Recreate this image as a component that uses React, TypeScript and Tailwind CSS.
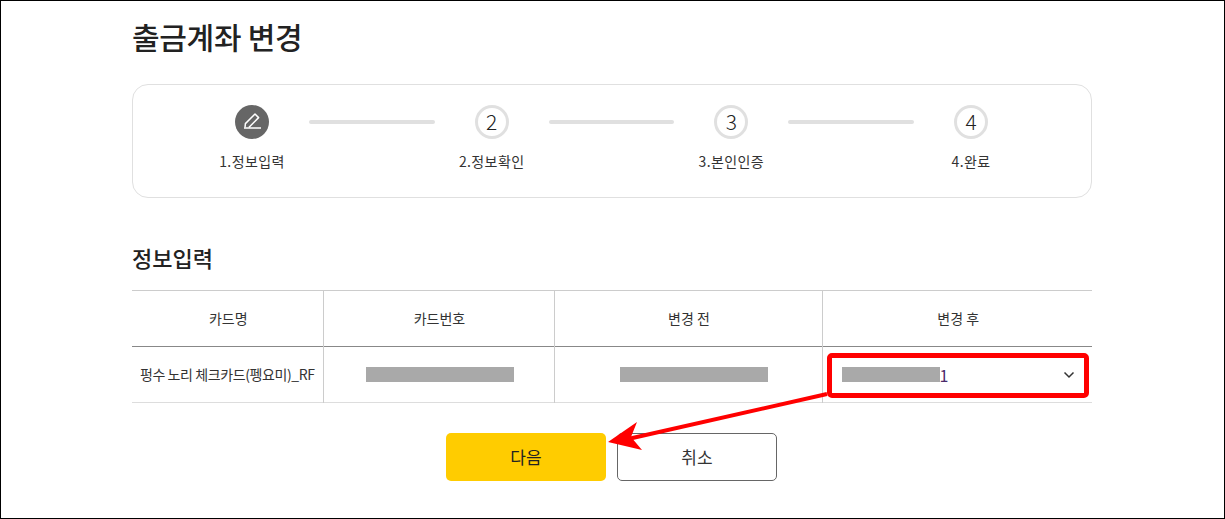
import React from "react";

const steps = ["1.정보입력", "2.정보확인", "3.본인인증", "4.완료"];

function Pencil() {
  return (
    <svg width="34" height="34" viewBox="0 0 34 34" fill="none" stroke="#fff" strokeWidth="1.5">
      <path d="M10 22.5 L10.4 18.6 L20 9 L23.6 12.6 L13.8 22.5" strokeLinejoin="round" />
      <path d="M9 23 H26" />
    </svg>
  );
}

function Step({ index, label }: { index: number; label: string }) {
  return (
    <div className="w-[114px] flex flex-col items-center shrink-0">
      {index === 0 ? (
        <div className="w-[34px] h-[34px] rounded-full bg-[#666666]">
          <Pencil />
        </div>
      ) : (
        <div className="w-[34px] h-[34px] rounded-full border-[3px] border-[#e0e0e0] flex items-center justify-center pb-[1px] text-[21px] leading-none font-light text-[#222222]">
          {index + 1}
        </div>
      )}
      <div className="mt-[12px] text-[14px] leading-[20px] tracking-[0.4px] text-[#333333] whitespace-nowrap">{label}</div>
    </div>
  );
}

function Masked({ w }: { w: string }) {
  return <span className={`block h-[15px] bg-[#a9a9a9] ${w}`} />;
}

export default function App() {
  return (
    <div className="relative w-[1225px] h-[519px] border border-black bg-white overflow-hidden font-['Noto_Sans_CJK_KR','Noto_Sans',sans-serif] text-[#222222]">
      <div className="ml-[131px] w-[960px]">
        <h1 className="pt-[12px] h-[83px] text-[30px] leading-[46px] font-medium text-[#222222] tracking-[-0.3px]">출금계좌 변경</h1>

        <div className="h-[114px] rounded-[16px] border border-[#e0e0e0] pl-[62px] pr-[63px] pt-[20px] flex items-start">
          {steps.map((s, i) => (
            <React.Fragment key={s}>
              <Step index={i} label={s} />
              {i < 3 && <div className="flex-1 h-[4px] mt-[15px] rounded-full bg-[#e0e0e0]" />}
            </React.Fragment>
          ))}
        </div>

        <h2 className="mt-[43px] h-[49px] text-[22px] leading-[32px] font-medium text-[#222222]">정보입력</h2>

        <table className="w-[960px] table-fixed border-collapse text-[14px] text-[#333333]">
          <colgroup>
            <col className="w-[191px]" />
            <col className="w-[231px]" />
            <col className="w-[268px]" />
            <col className="w-[270px]" />
          </colgroup>
          <thead>
            <tr className="h-[56px] border-t border-b border-t-[#cccccc] border-b-[#888888]">
              <th className="font-normal border-r border-[#cccccc] pl-[2px]">카드명</th>
              <th className="font-normal border-r border-[#cccccc] pl-[2px]">카드번호</th>
              <th className="font-normal border-r border-[#cccccc] pl-[2px]">변경 전</th>
              <th className="font-normal pl-[2px]">변경 후</th>
            </tr>
          </thead>
          <tbody>
            <tr className="h-[56px] border-b border-[#dddddd]">
              <td className="border-r border-[#cccccc] text-center whitespace-nowrap tracking-[-0.4px] text-[#333333]">펑수 노리 체크카드(펭요미)_RF</td>
              <td className="border-r border-[#cccccc] pl-[42px]"><Masked w="w-[148px]" /></td>
              <td className="border-r border-[#cccccc] pl-[65px]"><Masked w="w-[148px]" /></td>
              <td className="pl-[19px] pr-[17px]">
                <div className="flex items-center justify-between">
                  <div className="flex items-center">
                    <Masked w="w-[98px]" />
                    <span className="text-[16px] text-[#4b2a6b] leading-none">1</span>
                  </div>
                  <svg width="12" height="8" viewBox="0 0 12 8" fill="none" stroke="#333" strokeWidth="1.5" className="mt-[1px]">
                    <path d="M1.5 1.5 L6 6 L10.5 1.5" />
                  </svg>
                </div>
              </td>
            </tr>
          </tbody>
        </table>

        <div className="mt-[30px] flex gap-[11px] pl-[314px]">
          <button className="w-[160px] h-[48px] rounded-[5px] bg-[#ffcc00] text-[17px] text-[#222222]">다음</button>
          <button className="w-[160px] h-[48px] rounded-[5px] border border-[#666666] bg-white text-[17px] text-[#333333]">취소</button>
        </div>
      </div>

      {/* annotation overlay */}
      <div className="absolute left-[826px] top-[352px] w-[262px] h-[45px] border-[5px] border-[#ff0000] rounded-[5px]" />
      <svg className="absolute left-[-1px] top-[-1px]" width="1225" height="519" fill="none">
        <path d="M827 394 L628 439" stroke="#ff0000" strokeWidth="4" />
        <path d="M608 442 L637 422 L631 437 L642 450 Z" fill="#ff0000" />
      </svg>
    </div>
  );
}
